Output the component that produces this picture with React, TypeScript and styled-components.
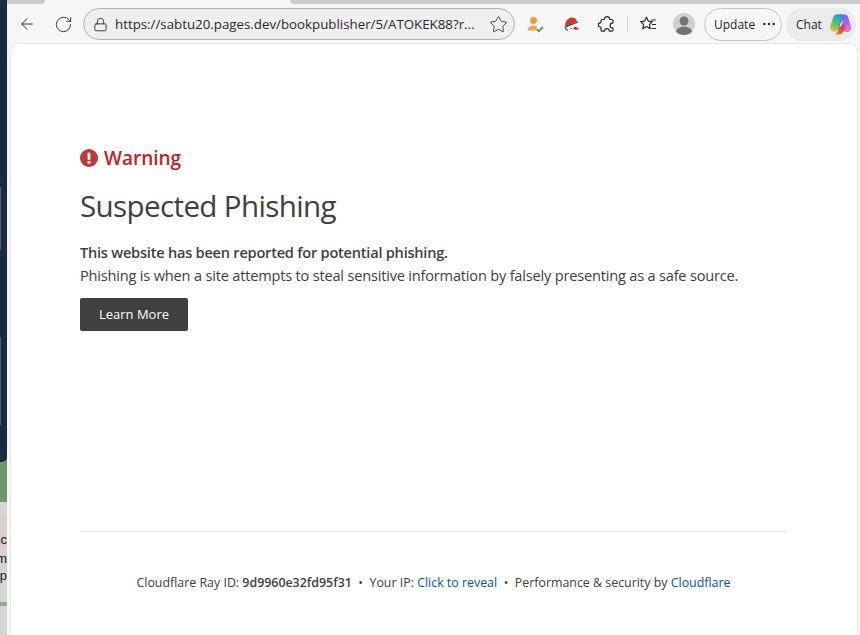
import React from 'react';
import styled, { createGlobalStyle } from 'styled-components';
import { ArrowLeft, RotateCw, Lock, Star, MoreHorizontal } from 'lucide-react';

const GlobalStyle = createGlobalStyle`
  html, body { margin: 0; padding: 0; background: #f7f7f7; overflow: hidden; }
  body { font-family: "Open Sans", "Noto Sans", sans-serif; }
`;

const Screen = styled.div`
  display: flex;
  width: 860px;
  height: 635px;
  overflow: hidden;
`;

const DesktopEdge = styled.div`
  display: flex;
  flex-direction: column;
  width: 7px;
  flex: none;
  background: #d4d4d4;
  overflow: hidden;
`;

const EdgeDark = styled.div`
  height: 462px;
  flex: none;
  background:
    linear-gradient(
        to bottom,
        transparent 187px,
        #5a6270 187px,
        #5a6270 250px,
        transparent 250px,
        transparent 337px,
        #3f6a5e 337px,
        #3f6a5e 425px,
        transparent 425px
      )
      0 0 / 1px 100% no-repeat,
    #1c2a40;
  border-bottom-right-radius: 5px;
  box-shadow: 0 0 0 40px #71956f;
`;

const EdgeGreen = styled.div`
  height: 38px;
  flex: none;
  background: #71956f;
`;

const EdgePink = styled.div`
  height: 30px;
  flex: none;
  margin-top: 18px;
  background: #d9cdcd;
`;

const EdgeText = styled.div`
  height: 17px;
  flex: none;
  width: 7px;
  overflow: hidden;
  direction: rtl;
  font-family: "Liberation Sans", sans-serif;
  font-size: 13px;
  line-height: 17px;
  color: #222;
`;

const EdgePinkText = styled(EdgeText)`
  margin-top: -18px;
  height: 20px;
  line-height: 20px;
`;

const EdgeBar = styled.div`
  height: 4px;
  flex: none;
  margin-top: 18px;
  background: #8faf8d;
`;

const Browser = styled.div`
  flex: 1;
  display: flex;
  flex-direction: column;
  background: #f7f7f7;
  min-width: 0;
`;

const TabStrip = styled.div`
  display: flex;
  height: 4px;
  flex: none;
  background: #f7f7f7;
`;

const TabStub = styled.div<{ $width: number }>`
  width: ${(p) => p.$width}px;
  flex: none;
  background: #cbcbcb;
  border-bottom-right-radius: 4px;
`;

const TabFill = styled.div`
  flex: 1;
  margin-left: 245px;
  background: #cbcbcb;
  border-bottom-left-radius: 6px;
`;

const Toolbar = styled.div`
  display: flex;
  align-items: center;
  height: 40px;
  flex: none;
  padding-left: 11px;
  color: #2b2b2b;
`;

const IconSlot = styled.div<{ $width?: number; $gap?: number }>`
  display: flex;
  align-items: center;
  justify-content: center;
  flex: none;
  width: ${(p) => p.$width ?? 36}px;
  height: 32px;
  margin-left: ${(p) => p.$gap ?? 0}px;
`;

const AddressBar = styled.div`
  display: flex;
  align-items: center;
  width: 432px;
  height: 32px;
  flex: none;
  box-sizing: border-box;
  margin-left: 2px;
  padding: 0 6px 0 9px;
  background: #efefef;
  border: 1px solid #b4b4b4;
  border-radius: 16px;
  font-family: "Open Sans", sans-serif;
  font-size: 13.3px;
  color: #2a2a2a;
`;

const Url = styled.span`
  flex: 1;
  margin-left: 7px;
  white-space: nowrap;
  overflow: hidden;
`;

const Divider = styled.div`
  width: 1px;
  height: 16px;
  flex: none;
  margin: 0 11px 0 0;
  background: #cfcfcf;
`;

const Avatar = styled.div`
  width: 22px;
  height: 22px;
  flex: none;
  margin-left: 16px;
  border-radius: 50%;
  overflow: hidden;
  background: #d2d0cf;
`;

const UpdateButton = styled.div`
  display: flex;
  align-items: center;
  gap: 6px;
  box-sizing: border-box;
  width: 78px;
  height: 33px;
  flex: none;
  margin-left: 9px;
  padding-left: 9px;
  border: 1px solid #c4c4c4;
  border-radius: 17px;
  font-size: 12px;
  color: #262626;
`;

const ChatButton = styled.div`
  display: flex;
  align-items: center;
  gap: 7px;
  box-sizing: border-box;
  width: 70px;
  height: 33px;
  flex: none;
  margin-left: 4px;
  padding-left: 10px;
  border-radius: 17px;
  background: #ebebeb;
  font-size: 12px;
  color: #262626;
`;

const Card = styled.main`
  flex: 1;
  display: flex;
  flex-direction: column;
  margin: 0 3px 0 4px;
  padding: 0 70px 0 69px;
  background: #fff;
  border-radius: 8px 8px 0 0;
  box-shadow: 0 0 2px rgba(0, 0, 0, 0.18);
  color: #404040;
`;

const WarningRow = styled.div`
  display: flex;
  align-items: center;
  gap: 6px;
  margin-top: 101px;
  height: 26px;
  font-size: 19px;
  font-weight: 600;
  color: #bd2426;
`;

const Heading = styled.h1`
  margin: 13px 0 0;
  height: 44px;
  font-size: 29.6px;
  line-height: 44px;
  font-weight: 400;
  letter-spacing: -0.65px;
  color: #404040;
`;

const Lead = styled.p`
  margin: 13px 0 0;
  font-size: 14.6px;
  line-height: 23px;
  font-weight: 600;
  letter-spacing: -0.24px;
`;

const Body = styled.p`
  margin: 0;
  font-size: 14.6px;
  line-height: 23px;
  letter-spacing: -0.2px;
  white-space: nowrap;
`;

const LearnMore = styled.button`
  align-self: flex-start;
  width: 108px;
  height: 33px;
  margin-top: 11px;
  padding: 0 0 2px;
  border: 0;
  border-radius: 2px;
  background: #404040;
  color: #fff;
  font-family: inherit;
  font-size: 13px;
`;

const Footer = styled.footer`
  margin-top: 200px;
  padding-top: 42px;
  border-top: 1px solid #e8e8e8;
  text-align: center;
  font-size: 12.4px;
  line-height: 18px;
  color: #404040;
`;

const FooterLink = styled.a`
  color: #0051c3;
`;

const Ray = styled.strong`
  font-weight: 600;
`;

const Sep = styled.span`
  margin: 0 6.500px;
`;

function CheckedUserIcon() {
  return (
    <svg width="17" height="17" viewBox="0 0 17 17">
      <circle cx="6.5" cy="4.5" r="3.4" fill="#f59a3c" />
      <path d="M0.8 14.500c0-3.200 2.600-5 5.700-5 1.300 0 2.400 0.300 3.300 0.800l-1 4.200z" fill="#f7a354" />
      <path d="M9.500 13l2.300 2.300 4-4.400" fill="none" stroke="#2e9e58" strokeWidth="1.600" />
    </svg>
  );
}

function HelmetIcon() {
  return (
    <svg width="18" height="18" viewBox="0 0 18 18">
      <rect x="2" y="1" width="15" height="15" rx="4" fill="#fff" />
      <path d="M3 11.500C2.800 6.500 6 2.500 10 2.500c2.600 0 4.400 1.600 5 4L5 11.200z" fill="#d7352c" />
      <path d="M2.500 12.500L16 7" stroke="#34434f" strokeWidth="1.300" fill="none" />
      <path d="M3.500 13c.4 1.300 1.200 2 2.300 2.200" stroke="#4d6a5c" strokeWidth="1.500" fill="none" />
      <path d="M7.500 14l1.800-1.500 1.300 1.500z" fill="#3f9a57" />
      <path d="M11 14.500c.5-1.700 1.500-2.800 2.600-2.800l3 1.800v1z" fill="#d01f1f" />
    </svg>
  );
}

function ExtensionIcon() {
  return (
    <svg width="18" height="18" viewBox="0 0 18 18" fill="none" stroke="#2b2b2b" strokeWidth="1.200" strokeLinejoin="round">
      <path d="M6.500 3.800c0-3 5-3 5 0 0 .4.200.7.600.7h1.700c.7 0 1.200.5 1.200 1.200v1.800c0 .4-.3.600-.7.600-2.900 0-2.900 4.800 0 4.800.4 0 .7.200.7.600v1.500c0 .7-.5 1.200-1.200 1.200h-2c-.4 0-.6-.3-.6-.7 0-2.600-4.400-2.600-4.400 0 0 .4-.2.700-.6.700H4.200c-.7 0-1.200-.5-1.200-1.200v-2.400c0-.4-.3-.6-.7-.6-2.700 0-2.700-4.200 0-4.200.4 0 .7-.2.700-.6V5.700c0-.7.500-1.200 1.200-1.200h1.700c.4 0 .6-.3.600-.7z" />
    </svg>
  );
}

function FavoritesIcon() {
  return (
    <svg width="18" height="18" viewBox="0 0 18 18" fill="none" stroke="#2b2b2b" strokeWidth="1.200" strokeLinejoin="round">
      <path d="M7.500 2.200l1.800 3.900 4.100.5-3 2.900.8 4.200-3.700-2.100-3.700 2.100.8-4.200-3-2.900 4.100-.5z" />
      <path d="M12.500 5h4.500M13 9.500h4M12.500 13.500h4.500" />
    </svg>
  );
}

function CopilotIcon() {
  return (
    <svg width="23" height="23" viewBox="0 0 23 23">
      <defs>
        <linearGradient id="copilotA" x1="0.1" y1="1" x2="0.8" y2="0">
          <stop offset="0" stopColor="#f6c62a" />
          <stop offset="0.45" stopColor="#45c96f" />
          <stop offset="1" stopColor="#1c8fee" />
        </linearGradient>
        <linearGradient id="copilotB" x1="0.2" y1="0" x2="0.8" y2="1">
          <stop offset="0" stopColor="#3d7ff2" />
          <stop offset="0.5" stopColor="#a35ef0" />
          <stop offset="1" stopColor="#ef7cc0" />
        </linearGradient>
        <linearGradient id="copilotC" x1="0" y1="1" x2="1" y2="0">
          <stop offset="0" stopColor="#f89a1c" />
          <stop offset="0.6" stopColor="#ec3f3c" />
          <stop offset="1" stopColor="#b13fb0" />
        </linearGradient>
      </defs>
      <path d="M7 1.500h9c1.600 0 2.600 1 3.100 2.500L22 13.500c.6 3-1 5.500-3.500 5.500H16L9 12 11.500 5z" fill="url(#copilotB)" />
      <path d="M7 1.500h8.500c-2 .3-3.200 1.700-3.700 3.500L9.500 14c-.6 2.500-2 4.500-4.500 4.500-2.800 0-4.500-2.300-4-5L4 5c.5-2 1.400-3.500 3-3.500z" fill="url(#copilotA)" />
      <path d="M9.500 14L12.500 9.500l3.500 3c-.3 3-1 5.500-2.500 7.300-.9 1-2 1.700-3.500 1.700H4.500c2.600 0 3.900-2 4.500-4.500z" fill="url(#copilotC)" />
      <path d="M14 7.500c-1.600 1-2.800 3.500-3.500 7 1.800-1 2.800-3.300 3.500-7z" fill="#fbeef2" />
    </svg>
  );
}

export default function App() {
  return (
    <Screen>
      <GlobalStyle />
      <DesktopEdge>
        <EdgeDark />
        <EdgeGreen />
        <EdgePink />
        <EdgePinkText>nc</EdgePinkText>
        <EdgeText>m</EdgeText>
        <EdgeText>p</EdgeText>
        <EdgeBar />
      </DesktopEdge>
      <Browser>
        <TabStrip>
          <TabStub $width={38} />
          <TabFill />
        </TabStrip>
        <Toolbar>
          <IconSlot $width={18}>
            <ArrowLeft size={28} strokeWidth={1.200} color="#1f1f1f" />
          </IconSlot>
          <IconSlot $width={36} $gap={9}>
            <RotateCw size={19} strokeWidth={1.150} />
          </IconSlot>
          <AddressBar>
            <Lock size={15} strokeWidth={1.400} />
            <Url>https://sabtu20.pages.dev/bookpublisher/5/ATOKEK88?r...</Url>
            <Star size={19} strokeWidth={1.050} />
          </AddressBar>
          <IconSlot $width={40}>
            <CheckedUserIcon />
          </IconSlot>
          <IconSlot $width={32}>
            <HelmetIcon />
          </IconSlot>
          <IconSlot $width={40}>
            <ExtensionIcon />
          </IconSlot>
          <Divider />
          <FavoritesIcon />
          <Avatar>
            <svg width="22" height="22" viewBox="0 0 22 22">
              <circle cx="11" cy="8" r="4.500" fill="#737373" />
              <ellipse cx="11" cy="19" rx="8" ry="5.500" fill="#737373" />
            </svg>
          </Avatar>
          <UpdateButton>
            Update
            <MoreHorizontal size={16} strokeWidth={1.700} />
          </UpdateButton>
          <ChatButton>
            Chat
            <CopilotIcon />
          </ChatButton>
        </Toolbar>
        <Card>
          <WarningRow>
            <svg width="18" height="18" viewBox="0 0 18 18">
              <circle cx="9" cy="9" r="9" fill="#bd3b34" />
              <rect x="7.600" y="3.500" width="2.800" height="7.500" rx="1.200" fill="#fff" />
              <circle cx="9" cy="13.300" r="1.600" fill="#fff" />
            </svg>
            Warning
          </WarningRow>
          <Heading>Suspected Phishing</Heading>
          <Lead>This website has been reported for potential phishing.</Lead>
          <Body>Phishing is when a site attempts to steal sensitive information by falsely presenting as a safe source.</Body>
          <LearnMore>Learn More</LearnMore>
          <Footer>
            Cloudflare Ray ID: <Ray>9d9960e32fd95f31</Ray>
            <Sep>•</Sep>
            Your IP: <FooterLink>Click to reveal</FooterLink>
            <Sep>•</Sep>
            Performance &amp; security by <FooterLink>Cloudflare</FooterLink>
          </Footer>
        </Card>
      </Browser>
    </Screen>
  );
}
